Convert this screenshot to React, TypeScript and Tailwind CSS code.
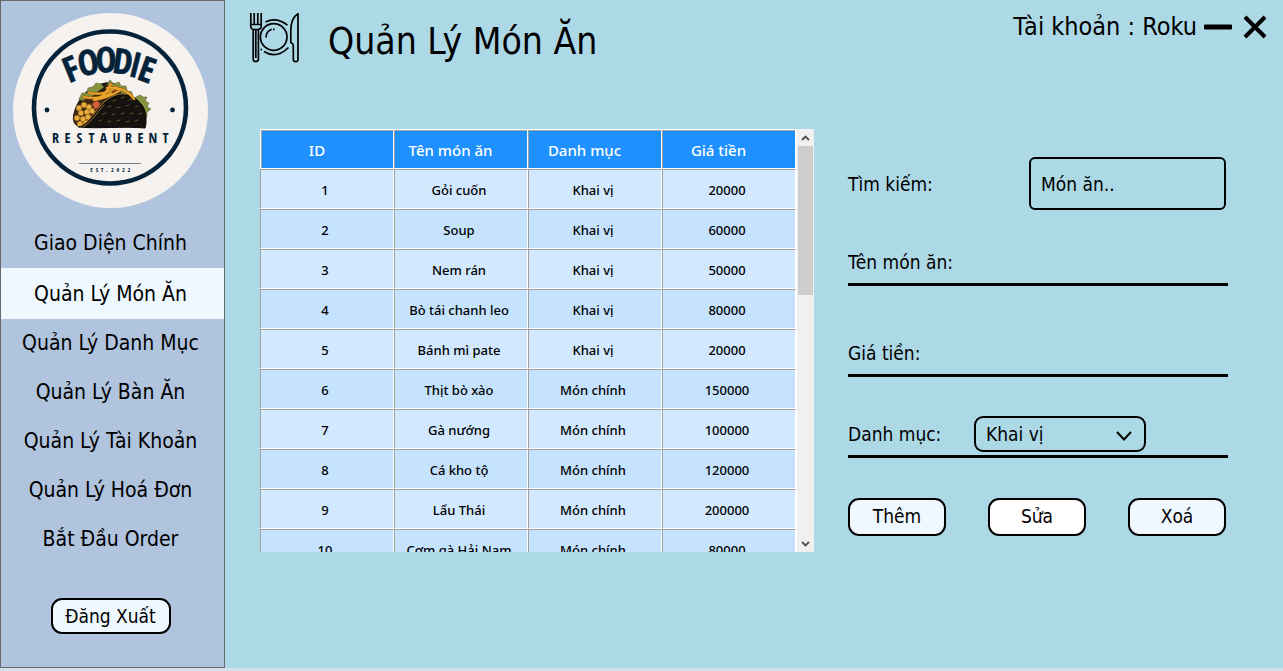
const navItems = [
  "Giao Diện Chính",
  "Quản Lý Món Ăn",
  "Quản Lý Danh Mục",
  "Quản Lý Bàn Ăn",
  "Quản Lý Tài Khoản",
  "Quản Lý Hoá Đơn",
  "Bắt Đầu Order",
];

const columns = ["ID", "Tên món ăn", "Danh mục", "Giá tiền"];

const dishes: [number, string, string, number][] = [
  [1, "Gỏi cuốn", "Khai vị", 20000],
  [2, "Soup", "Khai vị", 60000],
  [3, "Nem rán", "Khai vị", 50000],
  [4, "Bò tái chanh leo", "Khai vị", 80000],
  [5, "Bánh mì pate", "Khai vị", 20000],
  [6, "Thịt bò xào", "Món chính", 150000],
  [7, "Gà nướng", "Món chính", 100000],
  [8, "Cá kho tộ", "Món chính", 120000],
  [9, "Lẩu Thái", "Món chính", 200000],
  [10, "Cơm gà Hải Nam", "Món chính", 80000],
];

// Letter, centre x, centre y, rotation in degrees
const arcLetters: [string, number, number, number][] = [
  ["F", 58, 56, -22],
  ["O", 75, 49.5, -10],
  ["O", 93, 46.5, -1],
  ["D", 110, 48.5, 8],
  ["I", 122.5, 52, 14],
  ["E", 134, 56.5, 20],
];

const kernels: [number, number][] = [
  [66, 95], [71, 92], [76, 94], [68, 100], [74, 99], [79, 98],
  [64, 105], [70, 106], [75, 104], [67, 111], [73, 110],
];

const flecks: [number, number][] = [
  [100, 88], [108, 85], [116, 87], [95, 94], [104, 95], [113, 93], [122, 94],
  [90, 101], [99, 102], [108, 101], [117, 101], [126, 101], [86, 108],
  [95, 109], [104, 108], [113, 109], [122, 108],
];

const fries =
  "M71 84Q86 87 98 80M76 80Q92 83 103 74M81 87Q94 85 106 78M98 71Q94 79 88 84M94 75Q110 73 119 83M104 76Q114 76 121 86";

function Logo() {
  return (
    <svg viewBox="0 0 195 195" className="size-[195px]" role="img" aria-label="Foodie Restaurent">
      <circle cx="97.500" cy="97.500" r="97.500" fill="#f6f2f0" />
      <circle cx="97" cy="94.500" r="76" fill="none" stroke="#04233a" strokeWidth="4.600" />
      <g
        fill="#04233a"
        fontFamily="'Liberation Sans Narrow', 'Open Sans Condensed', 'Roboto Condensed', Roboto, sans-serif"
        textAnchor="middle"
      >
        <g fontSize="35" fontWeight="700" stroke="#04233a" strokeWidth="0.600" strokeLinejoin="round">
          {arcLetters.map(([ch, x, y, r], i) => (
            <text key={i} x={x} y={y + 12.5} transform={`rotate(${r} ${x} ${y})`}>{ch}</text>
          ))}
        </g>
        <text fontSize="14" fontWeight="700" y="130" x="42.500 54.500 66.500 78.500 90.500 103.500 115.500 127.500 140 152.500">RESTAURENT</text>
        <text fontSize="6" fontWeight="700" y="159" x="78.500 84 89 94 99.500 105 110.500 116">EST.2022</text>
      </g>
      <circle cx="34" cy="97" r="2.400" fill="#04233a" />
      <circle cx="159.500" cy="97" r="2.400" fill="#04233a" />
      <path d="M66 150.500h62" stroke="#56636c" strokeWidth="0.800" />
      <g strokeLinecap="round" strokeLinejoin="round">
        <path d="M60 105C61 91 72 75 87 71C96 67 104 70 112 76L120 84L126 91L130 96L128 103L104 96Z" fill="#241d14" />
        <g fill="#87943f" stroke="#454e22" strokeWidth="0.500">
          <path d="M66 86l3-6 5 0 1-5 5-1 3-4 5 1 3 3-8 6-5 5-8 3z" />
          <path d="M94 72l3-5 4 4 5-2 2 4 5 0 1 5 5 1 0 5-8-3-8-4z" />
          <path d="M121 85l6-3 3 2 4 0-2 4 4 2-2 4 4 2-4 3 0 5-5-2-2-8z" />
        </g>
        <path d="M60 103C63 93 68 86 79 84L94 86L82 105L68 114C62 114 59 109 60 103Z" fill="#3b2815" />
        <g fill="#e8ae3e" stroke="#9b6419" strokeWidth="0.600">
          {kernels.map(([x, y], i) => <circle key={i} cx={x} cy={y} r="2.800" />)}
        </g>
        <path d="M79 91l4-3 4 2-1 4-4 2z" fill="#dc5e3d" />
        <path d="M98 75l4 0 1 3-5 1zM91 82l5-1-2 3z" fill="#cf5132" />
        <path d="M66 114C76 111 82 100 91 91C98 84 106 81 113 82C125 84 133 94 133 105C133 110 133 113 132 115C110 113 84 116 66 114Z" fill="#15130f" stroke="#060606" />
        <path d="M68 113C78 107 82 98 89 91C96 84 104 80 112 81M70 114C80 108 84 99 91 92" fill="none" stroke="#c18a35" strokeWidth="0.800" />
        <path d={fries} fill="none" stroke="#965c16" strokeWidth="3" />
        <path d={fries} fill="none" stroke="#eaa42c" strokeWidth="1.800" />
        <g stroke="#8d6531" strokeWidth="0.700">
          {flecks.map(([x, y], i) => <path key={i} d={`M${x} ${y}l3 -1`} />)}
        </g>
      </g>
    </svg>
  );
}

function DiningIcon() {
  return (
    <svg viewBox="0 0 50 50" className="size-[50px] shrink-0" fill="none" stroke="#000" strokeWidth="1.700" aria-hidden="true">
      <path d="M1.800 0v11.500h10.400V0M5.200 0v11.500M8.800 0v11.500M1.800 11.500V14q0 1.500 2.400 2.500v29.500q0 2.500 2.600 2.500t2.600-2.500V16.500q2.800-1 2.800-2.500v-2.500M4.200 16.500h5.200M6.800 17v28" />
      <circle cx="24.700" cy="24" r="13.300" />
      <path d="M17 24.500q0-6 5.700-8.200M24 16.300h1.600M16.500 9q11-5.500 22 3.200M15 38.500q12.500 8 24.500-4" />
      <path d="M11.500 36.500h1.600" />
      <path d="M49 .8Q41.800 5 41.800 18v11.500q2.500 1 2.500 3V46q0 2.700 2.400 2.700T49 46Z" />
    </svg>
  );
}

function Arrow({ down = false }: { down?: boolean }) {
  return (
    <svg viewBox="0 0 9 6" className="h-1.5 w-[9px]" fill="none" stroke="#505050" strokeWidth="1.800" aria-hidden="true">
      <path d={down ? "M1 1l3.500 3.500L8 1" : "M1 5l3.500-3.500L8 5"} />
    </svg>
  );
}

function DishTable() {
  return (
    <div className="flex h-[423px] min-w-0 flex-[554]">
      <div className="min-w-0 flex-1 overflow-y-scroll bg-white pr-px [scrollbar-width:none]">
        <table className="w-full table-fixed border-separate border-spacing-0 text-center font-['Noto_Sans',sans-serif]">
          <thead>
            <tr className="h-10 bg-[#1e90ff] text-[15px] font-medium text-white">
              {columns.map((c) => (
                <th
                  key={c}
                  className="border-t border-r border-b border-white pt-0.5 pr-5 pb-0 pl-0 font-medium shadow-[inset_1px_1px_0_#a0a0a0] first:border-l"
                >
                  {c}
                </th>
              ))}
            </tr>
          </thead>
          <tbody>
            {dishes.map((row) => (
              <tr key={row[0]} className="h-10 bg-[#d1e8ff] text-[13px] font-medium text-black even:bg-[#c5e3ff]">
                {row.map((v, i) => (
                  <td key={i} className="border border-t-[#a0a0a0] border-r-white border-b-white border-l-[#a0a0a0] pt-1 pr-1 pb-0 pl-0">
                    {v}
                  </td>
                ))}
              </tr>
            ))}
          </tbody>
        </table>
      </div>
      <div className="flex w-[17px] flex-col items-center bg-[#f0f0f0]">
        <button type="button" aria-label="Cuộn lên" className="flex h-[17px] w-full items-center justify-center"><Arrow /></button>
        <div className="h-[149px] w-[15px] bg-[#cdcdcd]" />
        <button type="button" aria-label="Cuộn xuống" className="mt-auto flex h-[17px] w-full items-center justify-center"><Arrow down /></button>
      </div>
    </div>
  );
}

const actionButton =
  "h-[38px] w-[98px] rounded-[11px] border-2 border-black pb-0.5 text-[19px] leading-6";

function DishForm() {
  return (
    <form className="flex min-w-0 flex-[380] flex-col pt-7 text-[19px] leading-6" onSubmit={(e) => e.preventDefault()}>
      <div className="flex h-[53px] items-center justify-between pr-0.5">
        <label htmlFor="search">Tìm kiếm:</label>
        <input
          id="search"
          defaultValue="Món ăn.."
          className="h-[53px] w-[197px] rounded-[6px] border-2 border-black bg-transparent px-2.5 outline-none"
        />
      </div>
      <div className="mt-[31px] flex h-[45px] items-center border-b-3 border-black">
        <label htmlFor="name">Tên món ăn:</label>
        <input id="name" className="ml-4 min-w-0 flex-1 bg-transparent outline-none" />
      </div>
      <div className="mt-[46px] flex h-[45px] items-center border-b-3 border-black">
        <label htmlFor="price">Giá tiền:</label>
        <input id="price" className="ml-4 min-w-0 flex-1 bg-transparent outline-none" />
      </div>
      <div className="mt-9 flex h-[45px] items-center border-b-3 border-black">
        <label htmlFor="category" className="w-[126px]">Danh mục:</label>
        <div className="relative w-[172px]">
          <select
            id="category"
            className="h-9 w-full appearance-none rounded-[9px] border-2 border-black bg-transparent px-2.5 outline-none"
          >
            <option>Khai vị</option>
            <option>Món chính</option>
          </select>
          <svg viewBox="0 0 16 10" className="pointer-events-none absolute top-[15px] right-3.5 h-2.5 w-4" fill="none" stroke="#000" strokeWidth="2" aria-hidden="true">
            <path d="M1 1l7 7.500L15 1" />
          </svg>
        </div>
      </div>
      <div className="mt-10 flex justify-between pr-0.5">
        <button type="submit" className={`${actionButton} bg-[#f0f8ff]`}>Thêm</button>
        <button type="button" className={`${actionButton} bg-white`}>Sửa</button>
        <button type="button" className={`${actionButton} bg-[#f0f8ff]`}>Xoá</button>
      </div>
    </form>
  );
}

export default function App() {
  return (
    <div className="flex min-h-screen border-b-3 border-[#d5e0ef] bg-[#add8e6] font-['DejaVu_Sans_Condensed','Noto_Sans',sans-serif] text-black">
      <aside className="flex w-[225px] shrink-0 flex-col items-center border border-[#696969] bg-[#b0c4de]">
        <div className="pt-3 pr-1">
          <Logo />
        </div>
        <nav className="mt-[9px] flex w-full flex-col text-[21px] leading-7">
          {navItems.map((item, i) => (
            <a
              key={item}
              href="#"
              className={
                i < 2
                  ? `flex h-[51px] items-center justify-center pr-1 ${i === 1 ? "bg-[#f0f8ff]" : ""}`
                  : "flex h-[49px] items-center justify-center pr-1 pb-0.5"
              }
            >
              {item}
            </a>
          ))}
        </nav>
        <div className="mt-[34px] pr-1">
          <button type="button" className="h-9 w-[120px] rounded-[11px] border-2 border-black bg-[#f0f8ff] text-[19px] leading-6">
            Đăng Xuất
          </button>
        </div>
      </aside>
      <main className="min-w-0 flex-1">
        <header className="flex h-[129px] items-start pt-[13px] pr-4 pl-6">
          <DiningIcon />
          <h1 className="ml-[29px] text-[37px] leading-[58px]">Quản Lý Món Ăn</h1>
          <div className="ml-auto flex h-7 items-center">
            <span className="text-[25px] leading-7">Tài khoản : Roku</span>
            <button type="button" aria-label="Thu nhỏ" className="ml-1.5">
              <svg viewBox="0 0 30 24" className="h-6 w-[30px]" aria-hidden="true">
                <rect x="1" y="9.500" width="28" height="5" rx="1" />
              </svg>
            </button>
            <button type="button" aria-label="Đóng" className="ml-2.5">
              <svg viewBox="0 0 24 24" className="size-6" fill="none" stroke="#000" strokeWidth="4" aria-hidden="true">
                <path d="M2 2l20 20M22 2L2 22" />
              </svg>
            </button>
          </div>
        </header>
        <div className="flex gap-[34px] pr-[55px] pl-[35px]">
          <DishTable />
          <DishForm />
        </div>
      </main>
    </div>
  );
}
